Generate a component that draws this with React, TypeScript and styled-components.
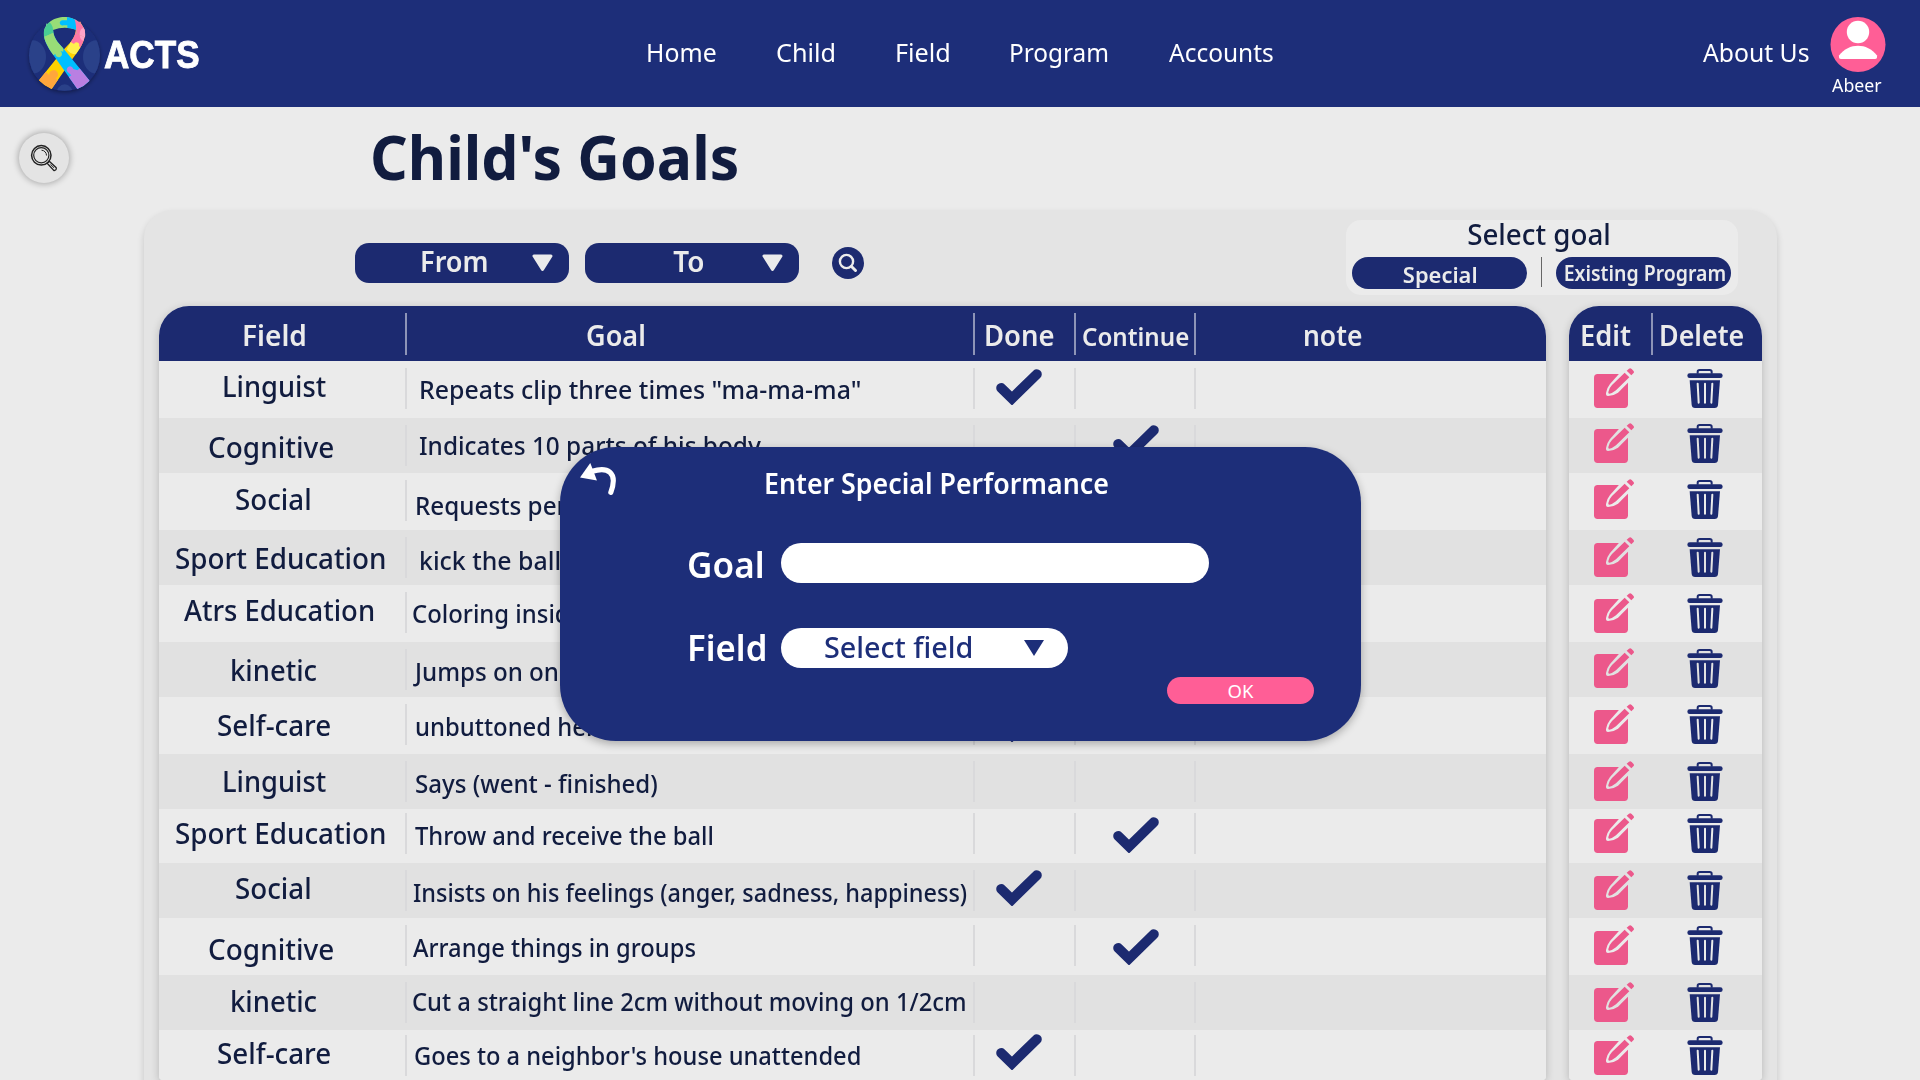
import React from 'react';
import styled, { createGlobalStyle, css } from 'styled-components';

const navy = '#1d2e79';
const deep = '#1c2a70';
const ink = '#111c3f';
const pale = '#ebebeb';
const pink = '#ff5e96';

const GlobalStyle = createGlobalStyle`
  * { box-sizing: border-box; }
  body {
    margin: 0;
    background: ${pale};
    font-family: 'Noto Sans', 'Open Sans', sans-serif;
    color: ${ink};
  }
`;

const Page = styled.div`
  position: relative;
  width: 1920px;
  height: 1080px;
  overflow: hidden;
`;

/* Condensed lettering: $fit narrows the glyphs towards the start or the middle. */
const condensed = css<{ $fit?: number }>`
  display: block;
  white-space: nowrap;
  transform: scaleX(${(p) => p.$fit ?? 1});
  transform-origin: left center;
`;

/* ---------- top bar ---------- */
const TopBar = styled.header`
  display: flex;
  height: 107px;
  background: ${navy};
  color: #fff;
`;
const Brand = styled.a`
  display: flex;
  width: 646px;
  padding: 10px 0 0 20px;
`;
const BrandName = styled.span<{ $fit?: number }>`
  ${condensed}
  margin-left: -3px;
  font: 700 39px/89px 'Liberation Sans', Arial, sans-serif;
  -webkit-text-stroke: 0.9px #fff;
`;
const Nav = styled.nav`
  display: grid;
  grid-template-columns: 129.5px 119px 114.5px 159.5px 534px;
`;
const NavLink = styled.a<{ $fit?: number }>`
  ${condensed}
  font-size: 25.6px;
  line-height: 106px;
`;
const User = styled.div`
  display: flex;
  flex-direction: column;
  align-items: center;
  width: 56px;
  margin-left: 17.5px;
  padding-top: 17px;
`;
const UserName = styled.span<{ $fit?: number }>`
  ${condensed}
  transform-origin: center;
  margin-left: -3px;
  font-size: 18.5px;
  line-height: 26px;
`;

/* ---------- heading ---------- */
const Heading = styled.div`
  display: flex;
  height: 103px;
  padding-left: 19px;
`;
const RoundButton = styled.button`
  display: grid;
  place-items: center;
  width: 50px;
  height: 50px;
  margin-top: 26px;
  padding: 0;
  border: 0;
  border-radius: 50%;
  background: #e4e4e4;
  box-shadow: 0 0 6px 1px rgba(0, 0, 0, 0.28);
`;
const Title = styled.h1<{ $fit?: number }>`
  ${condensed}
  margin: 10px 0 0 301px;
  font-size: 61px;
  font-weight: 700;
  line-height: 80px;
`;

/* ---------- panel ---------- */
const Panel = styled.main`
  width: 1633px;
  height: 900px;
  margin-left: 144px;
  padding: 0 15px;
  border-radius: 28px;
  background: #e4e4e4;
  box-shadow: 0 4px 7px rgba(0, 0, 0, 0.16);
`;
const Toolbar = styled.div`
  display: flex;
  align-items: flex-start;
  height: 96px;
  padding-left: 196px;
`;
const DatePill = styled.button`
  display: flex;
  width: 214px;
  height: 40px;
  margin: 33px 16px 0 0;
  padding: 0;
  border: 0;
  border-radius: 14px;
  background: ${deep};
  color: ${pale};
  font-family: inherit;
`;
const DateText = styled.span<{ $fit?: number; $shift: number }>`
  ${condensed}
  transform-origin: center;
  width: 176.5px;
  padding-left: ${(p) => p.$shift}px;
  text-align: center;
  font-size: 29.4px;
  font-weight: 600;
  line-height: 37px;
`;
const PillArrow = styled.svg`
  flex: none;
  margin-top: 11px;
`;
const FindButton = styled.button`
  display: grid;
  place-items: center;
  width: 32px;
  height: 32px;
  margin: 37px 0 0 17px;
  padding: 0;
  border: 0;
  border-radius: 50%;
  background: ${deep};
`;
const GoalPicker = styled.section`
  width: 392px;
  height: 75px;
  margin: 10px 24px 0 auto;
  border-radius: 15px;
  background: ${pale};
`;
const PickerTitle = styled.h2<{ $fit?: number }>`
  ${condensed}
  transform-origin: center;
  margin: 0 6px 9px 0;
  text-align: center;
  font-size: 29.3px;
  font-weight: 500;
  line-height: 28px;
`;
const PickerRow = styled.div`
  display: flex;
  padding-left: 6px;
`;
const PickerButton = styled.button`
  width: 175px;
  height: 32px;
  padding: 0;
  border: 0;
  border-radius: 16px;
  background: ${deep};
  color: ${pale};
  font-family: inherit;
`;
const PickerText = styled.span<{ $fit?: number; $size: number; $line: number }>`
  ${condensed}
  transform-origin: center;
  padding-left: 1.5px;
  font-size: ${(p) => p.$size}px;
  font-weight: 600;
  line-height: ${(p) => p.$line}px;
`;
const PickerRule = styled.i`
  width: 1px;
  height: 30px;
  margin: 0 14px;
  background: #666;
`;

/* ---------- tables ---------- */
const Tables = styled.div`
  display: flex;
  gap: 23px;
`;
const Lift = styled.div`
  border-radius: 30px 30px 4px 4px;
  box-shadow: 0 2px 8px rgba(0, 0, 0, 0.2);
`;
const Table = styled.div<{ $columns: string; $width: number }>`
  width: ${(p) => p.$width}px;
  overflow: hidden;
  border-radius: 30px 30px 4px 4px;
  background: ${pale};
  --columns: ${(p) => p.$columns};
`;
const HeadRow = styled.div`
  display: grid;
  grid-template-columns: var(--columns);
  height: 55px;
  background: ${deep};
  color: ${pale};
`;
const Row = styled.div<{ $height: number; $shade: boolean }>`
  display: grid;
  grid-template-columns: var(--columns);
  height: ${(p) => p.$height}px;
  background: ${(p) => (p.$shade ? '#e1e1e1' : pale)};
`;
const Cell = styled.div<{ $back?: number }>`
  display: flex;
  align-items: flex-start;
  min-width: 0;
  margin-left: ${(p) => -(p.$back ?? 0)}px;
`;
const Rule = styled.i<{ $head?: boolean; $top?: number }>`
  flex: none;
  width: 2px;
  height: ${(p) => (p.$head ? 42 : 41)}px;
  margin-top: ${(p) => p.$top ?? 7}px;
  background: ${(p) => (p.$head ? '#8d94b7' : '#d9d9db')};
`;
const HeadText = styled.span<{ $fit?: number; $left: number; $size?: number }>`
  ${condensed}
  margin-left: ${(p) => p.$left}px;
  font-size: ${(p) => p.$size ?? 29.5}px;
  font-weight: 600;
  line-height: ${(p) => (p.$size ? 60 : 58)}px;
`;
const FieldText = styled.span<{ $fit?: number; $left: number; $top: number }>`
  ${condensed}
  margin: ${(p) => p.$top}px 0 0 ${(p) => p.$left}px;
  font-size: 29.5px;
  font-weight: 500;
  line-height: 40px;
`;
const GoalText = styled.span<{ $fit?: number; $left: number; $top: number }>`
  ${condensed}
  margin: ${(p) => p.$top}px 0 0 ${(p) => p.$left}px;
  font-size: 24.5px;
  font-weight: 500;
  line-height: 42px;
`;
const Mark = styled.svg<{ $left: number; $top: number }>`
  display: block;
  flex: none;
  margin: ${(p) => p.$top}px 0 0 ${(p) => p.$left}px;
`;

/* ---------- dialog ---------- */
const Dialog = styled.section`
  position: absolute;
  left: 560px;
  top: 447px;
  width: 801px;
  height: 294px;
  border-radius: 56px;
  background: ${navy};
  color: #fff;
  box-shadow: 0 3px 8px rgba(0, 0, 0, 0.28);
`;
const DialogHead = styled.div`
  display: flex;
  height: 92px;
  padding: 16px 0 0 20px;
`;
const DialogTitle = styled.h2<{ $fit?: number }>`
  ${condensed}
  margin: 0 0 0 147px;
  font-size: 28px;
  font-weight: 600;
  line-height: 41px;
`;
const FormRow = styled.label`
  display: flex;
  align-items: flex-start;
  height: 50px;
  margin-bottom: 33px;
  padding-left: 127px;
`;
const LabelText = styled.span<{ $fit?: number }>`
  ${condensed}
  width: 94px;
  font-size: 36px;
  font-weight: 600;
  line-height: 52px;
`;
const GoalInput = styled.input`
  width: 428px;
  height: 40px;
  margin-top: 4px;
  padding: 0 20px;
  border: 0;
  border-radius: 20px;
  background: #fff;
`;
const Select = styled.div`
  display: flex;
  width: 287px;
  height: 40px;
  margin-top: 6px;
  padding-left: 43px;
  border-radius: 20px;
  background: #fff;
  color: ${navy};
`;
const SelectText = styled.span<{ $fit?: number }>`
  ${condensed}
  width: 200px;
  font-size: 29.5px;
  font-weight: 500;
  line-height: 38px;
`;
const SelectArrow = styled.i`
  width: 0;
  height: 0;
  margin-top: 12px;
  border: 10px solid transparent;
  border-top: 16px solid ${navy};
  border-bottom: 0;
`;
const OkButton = styled.button`
  display: block;
  width: 147px;
  height: 27px;
  margin: -28px 0 0 607px;
  padding: 0;
  border: 0;
  border-radius: 14px;
  background: ${pink};
  color: #fff;
  font: 400 18.5px/27px 'Noto Sans', sans-serif;
`;

/* ---------- drawings ---------- */
const Logo = () => (
  <svg width="86.67" height="90" viewBox="60 30 260 270">
    <defs>
      <filter id="soft" x="-20%" y="-20%" width="140%" height="140%">
        <feDropShadow dx="0" dy="5" stdDeviation="7" floodColor="#000" floodOpacity="0.4" />
      </filter>
      <clipPath id="disc"><circle cx="193.5" cy="166" r="106.5" /></clipPath>
      <clipPath id="under">
        <path d="M254 92C258 124 238 147 222 170L155 267Q133 258 117 241L188 152C206 132 228 116 228 84L240 64Z" />
      </clipPath>
      <clipPath id="over">
        <path d="M132 108C134 128 149 149 162 168L232 267Q254 258 269 242L196 152C180 134 160 118 159 88L140 70Z" />
      </clipPath>
      <clipPath id="arch">
        <path d="M132 110C126 74 160 51 193 51C227 51 262 76 255 112L228 100L228 89Q193 77 159 90L159 100Z" />
      </clipPath>
    </defs>
    <circle cx="193.5" cy="166" r="106.5" fill={navy} filter="url(#soft)" />
    <g clipPath="url(#disc)" fill="#2a4189">
      <ellipse cx="98" cy="171" rx="40" ry="50" />
      <ellipse cx="289" cy="171" rx="40" ry="50" />
      <ellipse cx="194" cy="282" rx="25" ry="29" />
    </g>
    <g clipPath="url(#under)">
      <rect x="100" y="50" width="170" height="220" fill="#ffd200" />
      <path d="M220 50H270V150L241 143L212 128Z" fill="#ff76a6" />
      <ellipse cx="250" cy="103" rx="11" ry="19" fill="#ffa3c8" />
      <path d="M212 126L222 132A8 8 0 1 1 237 138L244 145L230 163Q210 164 200 148Z" fill="#fff04e" />
      <path d="M100 225L136 214L148 226A13 13 0 1 1 167 235L182 248L150 280H100Z" fill="#ffa63c" />
    </g>
    <g clipPath="url(#over)">
      <rect x="120" y="60" width="160" height="220" fill="#00bfff" />
      <path d="M120 60H190V155L181 153A10 10 0 1 1 166 162L150 172L120 130Z" fill="#98dd77" />
      <path d="M200 235L214 226L203 216A10 10 0 1 1 220 207L232 211L245 200L290 250L240 280Z" fill="#b97fe2" />
    </g>
    <g clipPath="url(#arch)">
      <rect x="120" y="50" width="140" height="65" fill="#98dd77" />
      <path d="M120 50L140 62Q162 70 159 98L130 113Z" fill="#48cd94" />
      <path d="M201 50V61H190A8 8 0 1 0 190 76H202V92H228L228 50Z" fill="#00bfff" />
      <path d="M220 50Q232 70 228 120H262V60Z" fill="#ff76a6" />
      <ellipse cx="250" cy="103" rx="11" ry="19" fill="#ffa3c8" />
    </g>
  </svg>
);

const Avatar = () => (
  <svg width="56" height="55" viewBox="0 0 56 55">
    <circle cx="28" cy="27.5" r="27.5" fill={pink} />
    <circle cx="28" cy="15" r="11.2" fill="#fff" />
    <path d="M11 42Q8.500 42 9 38.500C14 32 21 28.800 28 28.800S42 32 47 38.500Q47.500 42 45 42Z" fill="#fff" />
  </svg>
);

const Magnifier = () => (
  <svg width="28" height="28" viewBox="0 0 28 28" fill="none" stroke="#222">
    <circle cx="11.300" cy="11.300" r="9.700" strokeWidth="1.500" />
    <circle cx="11.300" cy="11.300" r="7.600" strokeWidth="1.200" />
    <path d="M11.500 6.200A5.200 5.200 0 0 1 16.500 11.500" strokeWidth="1" />
    <path d="M17.200 19.200L19.200 17.200L26.200 23.700A2 2 0 0 1 23.600 26.300Z" strokeWidth="1.300" />
    <path d="M20.500 20.500L24 23.800" strokeWidth="0.900" />
  </svg>
);

const FindGlyph = () => (
  <svg width="20" height="20" viewBox="0 0 20 20" fill="none" stroke={pale}>
    <circle cx="8.500" cy="8.500" r="6.600" strokeWidth="2.400" />
    <path d="M13.500 13.500L17.500 17.500" strokeWidth="3" strokeLinecap="round" />
  </svg>
);

const Arrow = () => (
  <PillArrow width="21" height="18" viewBox="0 0 21 18">
    <path d="M2 2H19L10.500 15.500Z" fill={pale} stroke={pale} strokeWidth="3" strokeLinejoin="round" />
  </PillArrow>
);

const Check = ({ left, top }: { left: number; top: number }) => (
  <Mark $left={left} $top={top} width="46" height="36" viewBox="0 0 46 36">
    <path d="M5.200 19L16 29.500L40.800 5.200" fill="none" stroke={deep} strokeWidth="10" strokeLinecap="round" />
  </Mark>
);

const EditIcon = ({ top, shade }: { top: number; shade: boolean }) => {
  const back = shade ? '#e1e1e1' : pale;
  return (
    <Mark $left={25} $top={top} width="40" height="40" viewBox="0 0 120 120">
      <rect x="0" y="18" width="102" height="102" rx="11" fill="#ec588b" />
      <path d="M78 14L91 8L110 28L104 42L72 74Q58 84 42 84Q35 84 36 75Q38 60 48 48Z" fill={back} />
      <path d="M92 14L106 28L66 67Q55 76 46 77Q42 77 43 72Q45 60 54 51Z" fill="#ec588b" />
      <path d="M98 8L105 2Q109 -1 113 3L118 8Q122 12 118 16L112 22Z" fill="#ec588b" />
    </Mark>
  );
};

const TrashIcon = ({ top, shade }: { top: number; shade: boolean }) => (
  <Mark $left={35.5} $top={top + 1} width="36" height="39" viewBox="0 0 108 117">
    <path d="M32 14V8Q32 3 38 3H68Q74 3 74 8V14" fill="none" stroke={deep} strokeWidth="6" />
    <rect x="1" y="13" width="106" height="14" rx="7" fill={deep} />
    <path d="M8 34H99L93 108Q92 117 83 117H24Q15 117 14 108Z" fill={deep} />
    <path
      d="M32 44L35 101M54 44V101M76 44L73 101"
      stroke={shade ? '#e1e1e1' : pale}
      strokeWidth="6"
      strokeLinecap="round"
    />
  </Mark>
);

const BackIcon = () => (
  <svg width="37" height="32" viewBox="0 0 36 31">
    <path d="M12 8C26 3.500 37.500 8 30 28.500" fill="none" stroke="#fff" strokeWidth="5" strokeLinecap="round" />
    <path d="M0 14L10 0L16.500 17Z" fill="#fff" />
  </svg>
);

/* ---------- data ---------- */
const fieldLook: Record<string, { left: number; fit: number }> = {
  Linguist: { left: 62.5, fit: 0.925 },
  Cognitive: { left: 49, fit: 0.947 },
  Social: { left: 76, fit: 0.94 },
  'Sport Education': { left: 15.5, fit: 0.943 },
  'Atrs Education': { left: 25, fit: 0.93 },
  kinetic: { left: 70.5, fit: 0.93 },
  'Self-care': { left: 58, fit: 0.942 },
};

type Goal = {
  h: number;
  field: string;
  fy: number;
  goal: string;
  gx: number;
  gy: number;
  fit?: number;
  rule?: number;
  done?: number;
  cont?: number;
  edit: number;
};
const goals: Goal[] = [
  { h: 57, field: 'Linguist', fy: 5, goal: 'Repeats clip three times "ma-ma-ma"', gx: 12, gy: 8, fit: 1.016, done: 8, edit: 7 },
  { h: 55, field: 'Cognitive', fy: 9, goal: 'Indicates 10 parts of his body', gx: 12, gy: 7, fit: 0.994, cont: 7, edit: 5 },
  { h: 57, field: 'Social', fy: 6, goal: 'Requests permission', gx: 8, gy: 12, fit: 0.99, edit: 6 },
  { h: 55, field: 'Sport Education', fy: 8, goal: 'kick the ball', gx: 12, gy: 10, fit: 1.015, edit: 7 },
  { h: 57, field: 'Atrs Education', fy: 5, goal: 'Coloring inside', gx: 4.5, gy: 8, edit: 8 },
  { h: 55, field: 'kinetic', fy: 8, goal: 'Jumps on one foot', gx: 8, gy: 9, fit: 0.985, edit: 6 },
  { h: 57, field: 'Self-care', fy: 8, goal: 'unbuttoned her', gx: 8, gy: 9, done: 9, edit: 7 },
  { h: 55, field: 'Linguist', fy: 7, goal: 'Says (went - finished)', gx: 8, gy: 9, fit: 0.983, edit: 7 },
  { h: 54, field: 'Sport Education', fy: 4, goal: 'Throw and receive the ball', gx: 8, gy: 6, fit: 0.97, rule: 4, cont: 8, edit: 4 },
  { h: 55, field: 'Social', fy: 5, goal: 'Insists on his feelings (anger, sadness, happiness)', gx: 6, gy: 9, fit: 0.958, done: 7, edit: 7 },
  { h: 57, field: 'Cognitive', fy: 11, goal: 'Arrange things in groups', gx: 6, gy: 9, fit: 0.968, cont: 11, edit: 7 },
  { h: 55, field: 'kinetic', fy: 6, goal: 'Cut a straight line 2cm without moving on 1/2cm', gx: 5, gy: 6, fit: 0.972, edit: 7 },
  { h: 50, field: 'Self-care', fy: 3, goal: "Goes to a neighbor's house unattended", gx: 7, gy: 5, fit: 0.966, rule: 5, done: 4, edit: 5 },
];

export default function App() {
  return (
    <>
      <GlobalStyle />
      <Page>
        <TopBar>
          <Brand>
            <Logo />
            <BrandName $fit={0.9}>ACTS</BrandName>
          </Brand>
          <Nav>
            <NavLink $fit={0.97}>Home</NavLink>
            <NavLink $fit={0.985}>Child</NavLink>
            <NavLink $fit={0.985}>Field</NavLink>
            <NavLink $fit={0.952}>Program</NavLink>
            <NavLink $fit={0.957}>Accounts</NavLink>
          </Nav>
          <NavLink $fit={0.966}>About Us</NavLink>
          <User>
            <Avatar />
            <UserName $fit={0.96}>Abeer</UserName>
          </User>
        </TopBar>

        <Heading>
          <RoundButton aria-label="Search"><Magnifier /></RoundButton>
          <Title $fit={0.966}>Child's Goals</Title>
        </Heading>

        <Panel>
          <Toolbar>
            <DatePill><DateText $fit={0.921} $shift={24}>From</DateText><Arrow /></DatePill>
            <DatePill><DateText $fit={0.947} $shift={33}>To</DateText><Arrow /></DatePill>
            <FindButton aria-label="Find"><FindGlyph /></FindButton>
            <GoalPicker>
              <PickerTitle $fit={0.948}>Select goal</PickerTitle>
              <PickerRow>
                <PickerButton><PickerText $fit={0.995} $size={22} $line={35}>Special</PickerText></PickerButton>
                <PickerRule />
                <PickerButton><PickerText $fit={0.928} $size={21} $line={30}>Existing Program</PickerText></PickerButton>
              </PickerRow>
            </GoalPicker>
          </Toolbar>

          <Tables>
            <Lift>
              <Table $width={1387} $columns="246px 568px 102px 119px 352px">
                <HeadRow>
                  <Cell><HeadText $fit={0.95} $left={83}>Field</HeadText></Cell>
                  <Cell><Rule $head /><HeadText $fit={0.917} $left={179}>Goal</HeadText></Cell>
                  <Cell><Rule $head /><HeadText $fit={0.93} $left={9}>Done</HeadText></Cell>
                  <Cell $back={1}><Rule $head /><HeadText $fit={0.966} $left={6} $size={25}>Continue</HeadText></Cell>
                  <Cell><Rule $head /><HeadText $fit={0.896} $left={107}>note</HeadText></Cell>
                </HeadRow>
                {goals.map((g, i) => (
                  <Row key={i} $height={g.h} $shade={i % 2 === 1}>
                    <Cell>
                      <FieldText $fit={fieldLook[g.field].fit} $left={fieldLook[g.field].left} $top={g.fy}>
                        {g.field}
                      </FieldText>
                    </Cell>
                    <Cell>
                      <Rule $top={g.rule} />
                      <GoalText $fit={g.fit ?? 0.975} $left={g.gx} $top={g.gy}>{g.goal}</GoalText>
                    </Cell>
                    <Cell><Rule $top={g.rule} />{g.done !== undefined && <Check left={21} top={g.done} />}</Cell>
                    <Cell $back={1}><Rule $top={g.rule} />{g.cont !== undefined && <Check left={37} top={g.cont} />}</Cell>
                    <Cell><Rule $top={g.rule} /></Cell>
                  </Row>
                ))}
              </Table>
            </Lift>
            <Lift>
              <Table $width={193} $columns="82px 111px">
                <HeadRow>
                  <Cell><HeadText $fit={0.923} $left={11}>Edit</HeadText></Cell>
                  <Cell><Rule $head /><HeadText $fit={0.91} $left={6}>Delete</HeadText></Cell>
                </HeadRow>
                {goals.map((g, i) => (
                  <Row key={i} $height={g.h} $shade={i % 2 === 1}>
                    <Cell><EditIcon top={g.edit} shade={i % 2 === 1} /></Cell>
                    <Cell><TrashIcon top={g.edit} shade={i % 2 === 1} /></Cell>
                  </Row>
                ))}
              </Table>
            </Lift>
          </Tables>
        </Panel>

        <Dialog role="dialog">
          <DialogHead>
            <BackIcon />
            <DialogTitle $fit={0.956}>Enter Special Performance</DialogTitle>
          </DialogHead>
          <FormRow><LabelText $fit={0.975}>Goal</LabelText><GoalInput /></FormRow>
          <FormRow>
            <LabelText $fit={0.965}>Field</LabelText>
            <Select><SelectText $fit={0.975}>Select field</SelectText><SelectArrow /></Select>
          </FormRow>
          <OkButton>OK</OkButton>
        </Dialog>
      </Page>
    </>
  );
}
